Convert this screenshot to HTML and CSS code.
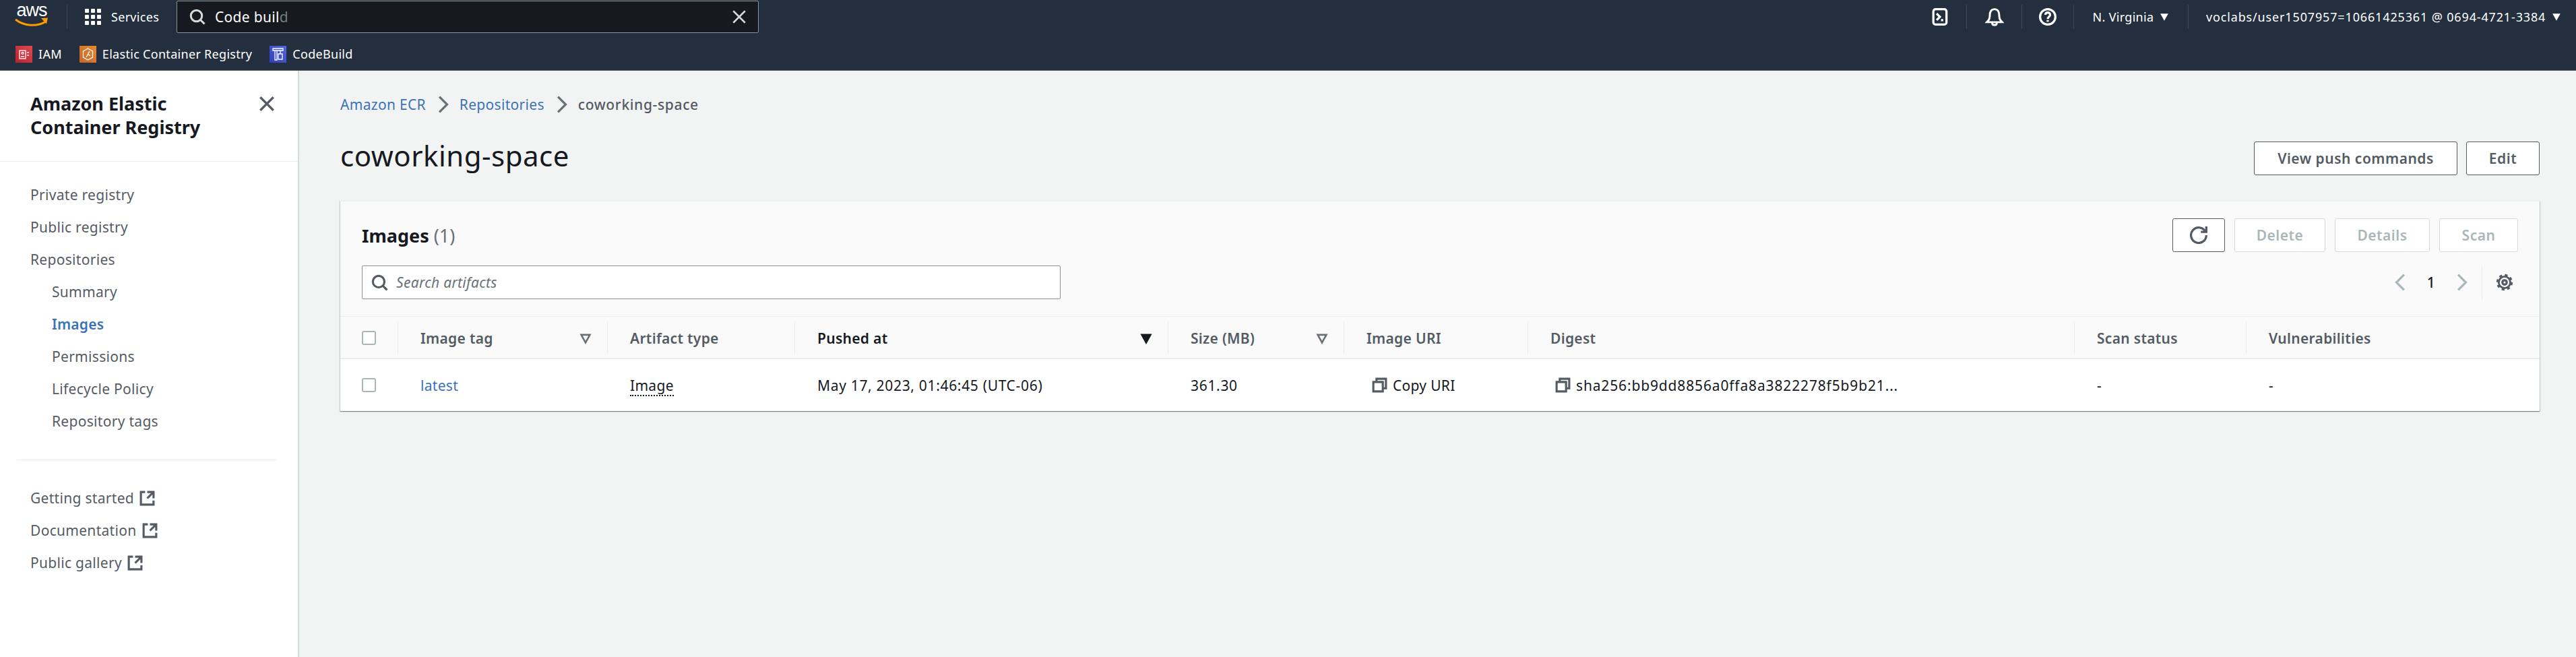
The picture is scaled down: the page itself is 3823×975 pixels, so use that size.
FILE: index.html
```html
<!DOCTYPE html>
<html lang="en">
<head>
    <meta charset="UTF-8">
    <title>coworking-space - Amazon ECR</title>
    <link rel="stylesheet" href="styles.css">
</head>
<body>
    <header class="topbar">
        <div class="toprow">
            <div class="logo">
                <span class="logo-text">aws</span>
                <svg class="logo-smile" viewBox="0 0 50 16"><path d="M1 3c13 10 32 11 45 3" fill="none" stroke="#f90" stroke-width="3"/><path d="M39 1l10-0.500-2 9z" fill="#f90"/></svg>
            </div>
            <div class="services">
                <svg class="grid-icon" viewBox="0 0 24 24" fill="#fff"><rect x="0" y="0" width="6" height="6" rx="1"/><rect x="9" y="0" width="6" height="6" rx="1"/><rect x="18" y="0" width="6" height="6" rx="1"/><rect x="0" y="9" width="6" height="6" rx="1"/><rect x="9" y="9" width="6" height="6" rx="1"/><rect x="18" y="9" width="6" height="6" rx="1"/><rect x="0" y="18" width="6" height="6" rx="1"/><rect x="9" y="18" width="6" height="6" rx="1"/><rect x="18" y="18" width="6" height="6" rx="1"/></svg>
                <span>Services</span>
            </div>
            <div class="topsearch">
                <svg class="icon-24 stroke-light" viewBox="0 0 16 16"><circle cx="7" cy="7" r="5.500"/><path d="M15 15l-4-4"/></svg>
                <span class="topsearch-text">Code buil<span class="ghost">d</span></span>
                <svg class="icon-20 stroke-light" viewBox="0 0 16 16"><path d="M1 1l14 14M15 1L1 15"/></svg>
            </div>
            <div class="topright">
                <div class="topitem item-shell">
                    <svg class="icon-26 stroke-white" viewBox="0 0 16 16"><rect x="2" y="1" width="12" height="14" rx="2"/><path d="M5 5l3 3-3 3M9 11h2"/></svg>
                </div>
                <div class="topitem item-bell">
                    <svg class="icon-28 stroke-white thin" viewBox="0 0 16 16"><path d="M1.500 12.500h13c-1.500-1.500-2.500-2.500-2.500-5.500 0-3-1-5.500-4-5.500S4 4 4 7c0 3-1 4-2.500 5.500z"/><path d="M6 13c0 1.500 1 2 2 2s2-.5 2-2"/></svg>
                </div>
                <div class="topitem item-help">
                    <svg class="icon-26 stroke-white" viewBox="0 0 16 16"><circle cx="8" cy="8" r="7"/><path d="M5.800 6.200C5.800 4.800 6.800 4 8 4s2.200.8 2.200 2.100c0 1.800-2.200 1.900-2.200 3.900"/><path d="M8 11v1.500"/></svg>
                </div>
                <div class="topitem item-region">
                    <span>N. Virginia</span>
                    <svg class="caret" viewBox="0 0 12 12" fill="#fff"><path d="M1 2h10L6 11z"/></svg>
                </div>
                <div class="topitem item-account">
                    <span class="wide-digits">voclabs/user1507957=10661425361 @ 0694-4721-3384</span>
                    <svg class="caret" viewBox="0 0 12 12" fill="#fff"><path d="M1 2h10L6 11z"/></svg>
                </div>
            </div>
        </div>
        <div class="bookmarks">
            <div class="bookmark">
                <span class="svc svc-iam"><svg viewBox="0 0 25 25" fill="none" stroke="#fff" stroke-width="1.300"><rect x="6" y="7" width="9" height="12"/><circle cx="10.500" cy="11" r="1.500"/><path d="M8 16h5M17 10h3M17 14h3"/></svg></span>
                <span>IAM</span>
            </div>
            <div class="bookmark">
                <span class="svc svc-ecr"><svg viewBox="0 0 25 25" fill="none" stroke="#fff" stroke-width="1.300"><path d="M12.500 4l7 4v9l-7 4-7-4V8z"/><path d="M10 17l5-9M12.500 12.500l3.500 2"/></svg></span>
                <span>Elastic Container Registry</span>
            </div>
            <div class="bookmark">
                <span class="svc svc-build"><svg viewBox="0 0 25 25" fill="none" stroke="#fff" stroke-width="1.300"><path d="M5 4h15v3H5zM8 7v14h3V7M13 12h6v8h-6zM16 7v5"/></svg></span>
                <span>CodeBuild</span>
            </div>
        </div>
    </header>

    <div class="layout">
        <nav class="sidebar">
            <div class="side-head">
                <h2>Amazon Elastic Container Registry</h2>
                <svg class="icon-26 stroke-grey side-close" viewBox="0 0 16 16"><path d="M2 2l12 12M14 2L2 14"/></svg>
            </div>
            <ul class="side-list">
                <li>Private registry</li>
                <li>Public registry</li>
                <li>Repositories</li>
                <li class="sub">Summary</li>
                <li class="sub active">Images</li>
                <li class="sub">Permissions</li>
                <li class="sub">Lifecycle Policy</li>
                <li class="sub">Repository tags</li>
            </ul>
            <div class="side-rule"></div>
            <ul class="side-list">
                <li>Getting started <svg class="icon-25 stroke-grey" viewBox="0 0 16 16"><path d="M14 8V2H8M14 2L8 8M6 2H2v12h12v-4"/></svg></li>
                <li>Documentation <svg class="icon-25 stroke-grey" viewBox="0 0 16 16"><path d="M14 8V2H8M14 2L8 8M6 2H2v12h12v-4"/></svg></li>
                <li>Public gallery <svg class="icon-25 stroke-grey" viewBox="0 0 16 16"><path d="M14 8V2H8M14 2L8 8M6 2H2v12h12v-4"/></svg></li>
            </ul>
        </nav>

        <main class="content">
            <div class="crumbs">
                <a>Amazon ECR</a>
                <svg class="crumb-sep" viewBox="0 0 16 16"><path d="M5 1l7 7-7 7"/></svg>
                <a>Repositories</a>
                <svg class="crumb-sep" viewBox="0 0 16 16"><path d="M5 1l7 7-7 7"/></svg>
                <span class="crumb-current">coworking-space</span>
            </div>

            <div class="page-head">
                <h1>coworking-space</h1>
                <div class="btn-row">
                    <button class="btn btn-push">View push commands</button>
                    <button class="btn btn-edit">Edit</button>
                </div>
            </div>

            <section class="card">
                <div class="card-head">
                    <div class="card-row">
                        <h3>Images <span class="count">(1)</span></h3>
                        <div class="actions">
                            <button class="btn btn-refresh"><svg class="icon-26 stroke-grey" viewBox="0 0 16 16"><path d="M10 5h5V0"/><path d="M15 8a7 7 0 1 1-.7-3"/></svg></button>
                            <button class="btn btn-off btn-delete">Delete</button>
                            <button class="btn btn-off btn-details">Details</button>
                            <button class="btn btn-off btn-scan">Scan</button>
                        </div>
                    </div>
                    <div class="card-row filter-row">
                        <div class="filter">
                            <svg class="icon-25 stroke-grey" viewBox="0 0 16 16"><circle cx="7" cy="7" r="5.500"/><path d="M15 15l-4-4"/></svg>
                            <span>Search artifacts</span>
                        </div>
                        <div class="pager">
                            <svg class="icon-26 stroke-off" viewBox="0 0 16 16"><path d="M11 1L4 8l7 7"/></svg>
                            <span class="page-num">1</span>
                            <svg class="icon-26 stroke-off" viewBox="0 0 16 16"><path d="M5 1l7 7-7 7"/></svg>
                            <div class="pager-gear">
                                <svg class="icon-26 stroke-grey" viewBox="0 0 16 16"><circle cx="8" cy="8" r="2"/><circle cx="8" cy="8" r="5.300" stroke-width="1.800"/><circle class="gear-teeth" cx="8" cy="8" r="6.600" stroke-width="1.800"/></svg>
                            </div>
                        </div>
                    </div>
                </div>

                <table class="grid">
                    <colgroup>
                        <col class="c-check"><col class="c-tag"><col class="c-type"><col class="c-pushed"><col class="c-size"><col class="c-uri"><col class="c-digest"><col class="c-scan"><col class="c-vuln">
                    </colgroup>
                    <thead>
                        <tr>
                            <th><div class="th-first"><span class="check"></span></div></th>
                            <th><div class="th-in"><span>Image tag</span><svg class="sort" viewBox="0 0 14 14"><path d="M2 3h10L7 12z"/></svg></div></th>
                            <th><div class="th-in">Artifact type</div></th>
                            <th><div class="th-in th-active"><span>Pushed at</span><svg class="sort sort-on" viewBox="0 0 14 14"><path d="M2 3h10L7 12z"/></svg></div></th>
                            <th><div class="th-in"><span>Size (MB)</span><svg class="sort" viewBox="0 0 14 14"><path d="M2 3h10L7 12z"/></svg></div></th>
                            <th><div class="th-in">Image URI</div></th>
                            <th><div class="th-in">Digest</div></th>
                            <th><div class="th-in">Scan status</div></th>
                            <th><div class="th-in">Vulnerabilities</div></th>
                        </tr>
                    </thead>
                    <tbody>
                        <tr>
                            <td class="td-check"><span class="check"></span></td>
                            <td><a>latest</a></td>
                            <td><span class="dotted">Image</span></td>
                            <td class="wide-digits">May 17, 2023, 01:46:45 (UTC-06)</td>
                            <td class="wide-digits">361.30</td>
                            <td><span class="copy"><svg class="icon-25 stroke-grey" viewBox="0 0 16 16"><path d="M2 5h9v9H2zM5 5V2h9v9h-3"/></svg>Copy URI</span></td>
                            <td><span class="copy copy-digest"><svg class="icon-25 stroke-grey" viewBox="0 0 16 16"><path d="M2 5h9v9H2zM5 5V2h9v9h-3"/></svg>sha256:bb9dd8856a0ffa8a3822278f5b9b21...</span></td>
                            <td>-</td>
                            <td>-</td>
                        </tr>
                    </tbody>
                </table>
            </section>
        </main>
    </div>
</body>
</html>
```

FILE: styles.css
```css
* {
    box-sizing: border-box;
}
body {
    margin: 0;
    height: 975px;
    overflow: hidden;
    font-family: "Noto Sans", "Open Sans", sans-serif;
    font-size: 21px;
    letter-spacing: 0.3px;
    color: #16191f;
    background-color: #f2f3f3;
}
h1, h2, h3, ul {
    margin: 0;
    padding: 0;
}
svg {
    flex: none;
    display: block;
}
.wide-digits {
    letter-spacing: 0.68px;
}

/* icons */
.icon-20, .icon-24, .icon-25, .icon-26, .icon-28 {
    fill: none;
    stroke-width: 2;
}
.icon-20 { width: 20px; height: 20px; }
.icon-24 { width: 24px; height: 24px; }
.icon-25 { width: 25px; height: 25px; }
.icon-26 { width: 26px; height: 26px; }
.icon-28 { width: 28px; height: 28px; }
.thin { stroke-width: 1.700; }
.stroke-light { stroke: #d5dbdb; }
.stroke-white { stroke: #fff; }
.stroke-grey { stroke: #545b64; }
.stroke-off { stroke: #aab7b8; }

/* top bar */
.topbar {
    height: 105px;
    background-color: #232f3e;
    border-bottom: 1px solid #545b64;
    color: #fff;
    font-size: 18px;
}
.toprow {
    display: flex;
    align-items: center;
    height: 50px;
}
.logo {
    width: 100px;
    height: 36px;
    padding-left: 22px;
    border-right: 1px solid #414750;
    line-height: 1;
}
.logo-text {
    display: block;
    width: 50px;
    height: 22px;
    margin-top: -4px;
    font-family: "Liberation Sans", sans-serif;
    font-size: 27px;
    line-height: 24px;
    text-align: center;
    letter-spacing: -1px;
}
.logo-smile {
    width: 50px;
    height: 16px;
    margin-top: 1px;
}
.services {
    display: flex;
    align-items: center;
    gap: 15px;
    width: 162px;
    padding-left: 26px;
}
.grid-icon {
    width: 24px;
    height: 24px;
}
.topsearch {
    display: flex;
    align-items: center;
    width: 864px;
    height: 48px;
    padding: 0 18px;
    background-color: #16191f;
    border: 1px solid #879596;
    border-radius: 2px;
    font-size: 21px;
}
.topsearch-text {
    flex: 1;
    margin-left: 14px;
}
.ghost {
    color: #6f8082;
}
.topright {
    display: flex;
    margin-left: auto;
}
.topitem {
    display: flex;
    align-items: center;
    justify-content: center;
    height: 36px;
    border-left: 1px solid #414750;
}
.item-shell { width: 79px; border-left: 0; }
.item-bell { width: 82px; }
.item-help { width: 77px; }
.item-region { width: 170px; gap: 9px; }
.item-account { width: 576px; gap: 9px; justify-content: flex-start; padding-left: 26px; }
.item-account .wide-digits {
    letter-spacing: 0.85px;
}
.caret {
    width: 14px;
    height: 14px;
}
.bookmarks {
    display: flex;
    align-items: center;
    height: 54px;
    padding: 6px 0 0 23px;
}
.bookmark {
    display: flex;
    align-items: center;
    gap: 9px;
    margin-right: 26px;
}
.svc {
    width: 25px;
    height: 25px;
}
.svc-iam { background: linear-gradient(45deg, #b8232f, #e0484f); }
.svc-ecr { background: linear-gradient(45deg, #c8642a, #e68a2e); }
.svc-build { background: linear-gradient(45deg, #3240b8, #5066e0); }

/* layout */
.layout {
    display: flex;
    height: 870px;
}
.sidebar {
    flex: none;
    width: 444px;
    background-color: #fff;
    border-right: 2px solid #d5dbdb;
    color: #545b64;
}
.side-head {
    display: flex;
    justify-content: space-between;
    height: 135px;
    padding: 31px 33px 0 45px;
    border-bottom: 1px solid #eaeded;
}
.side-head h2 {
    width: 300px;
    font-size: 27px;
    font-weight: 700;
    line-height: 35px;
    letter-spacing: 0;
    color: #16191f;
}
.side-close {
    margin-top: 5px;
}
.side-list {
    list-style: none;
    padding-top: 25px;
}
.side-list li {
    display: flex;
    align-items: center;
    gap: 7px;
    height: 48px;
    padding-left: 45px;
}
.side-list li.sub {
    padding-left: 77px;
}
.side-list li.active {
    color: #3b73b9;
    font-weight: 600;
    letter-spacing: 0.2px;
}
.side-rule {
    height: 1px;
    margin: 33px 32px 7px 25px;
    background-color: #eaeded;
}

/* main content */
.content {
    flex: 1;
    padding: 35px 54px 0 61px;
}
.crumbs {
    display: flex;
    align-items: center;
    height: 30px;
}
.crumbs a {
    color: #3b73b9;
}
.crumb-sep {
    width: 26px;
    height: 26px;
    margin: 0 12px;
    fill: none;
    stroke: #687078;
    stroke-width: 2;
}
.crumb-current {
    color: #545b64;
    font-weight: 500;
    letter-spacing: 0.65px;
}
.page-head {
    display: flex;
    align-items: center;
    justify-content: space-between;
    height: 60px;
    margin-top: 35px;
}
.page-head h1 {
    margin-bottom: 9px;
    font-size: 42px;
    font-weight: 400;
    letter-spacing: 0.5px;
}
.btn-row {
    display: flex;
    gap: 13px;
}
.actions {
    display: flex;
    gap: 14px;
}
.btn {
    display: flex;
    align-items: center;
    justify-content: center;
    height: 50px;
    padding: 0;
    background-color: #fff;
    border: 1px solid #545b64;
    border-radius: 3px;
    font-family: inherit;
    font-size: 21px;
    font-weight: 600;
    letter-spacing: 0.5px;
    color: #545b64;
}
.btn-push { width: 302px; }
.btn-edit { width: 109px; }
.btn-refresh { width: 78px; }
.btn-delete { width: 135px; }
.btn-details { width: 141px; }
.btn-scan { width: 117px; }
.btn-off {
    border-color: #d5dbdb;
    color: #aab7b8;
}

/* images card */
.card {
    height: 312px;
    margin-top: 33px;
    background-color: #fff;
    border-top: 1px solid #eaeded;
    box-shadow: 0 1px 1px 0 rgba(0, 28, 36, 0.3), 1px 1px 1px 0 rgba(0, 28, 36, 0.15), -1px 1px 1px 0 rgba(0, 28, 36, 0.15);
}
.card-head {
    height: 171px;
    padding: 25px 32px 0;
    background-color: #fafafa;
    border-bottom: 1px solid #eaeded;
}
.card-row {
    display: flex;
    align-items: center;
    justify-content: space-between;
}
.card-row h3 {
    font-size: 27px;
    font-weight: 700;
    letter-spacing: 0;
}
.count {
    font-weight: 400;
    color: #687078;
}
.filter-row {
    margin-top: 20px;
}
.filter {
    display: flex;
    align-items: center;
    gap: 12px;
    width: 1037px;
    height: 50px;
    padding-left: 13px;
    background-color: #fff;
    border: 1px solid #879596;
    border-radius: 2px;
    font-style: italic;
    color: #687078;
}
.pager {
    display: flex;
    align-items: center;
    height: 50px;
}
.page-num {
    width: 64px;
    text-align: center;
    font-weight: 500;
}
.pager-gear {
    display: flex;
    align-items: center;
    height: 50px;
    margin-left: 17px;
    padding: 0 7px 0 20px;
    border-left: 1px solid #eaeded;
}
.gear-teeth {
    stroke-dasharray: 2.600 2.583;
}

/* table */
.grid {
    width: 100%;
    table-layout: fixed;
    border-collapse: collapse;
}
.c-check { width: 85px; }
.c-tag { width: 311px; }
.c-type { width: 278px; }
.c-pushed { width: 554px; }
.c-size { width: 261px; }
.c-uri { width: 273px; }
.c-digest { width: 811px; }
.c-scan { width: 255px; }
.grid th {
    height: 62px;
    padding: 2px 0 0;
    background-color: #fafafa;
    border-bottom: 2px solid #eaeded;
    text-align: left;
    font-weight: 600;
    letter-spacing: 0.3px;
    color: #545b64;
}
.th-first {
    display: flex;
    align-items: center;
    padding-left: 32px;
}
.th-in {
    display: flex;
    align-items: center;
    justify-content: space-between;
    height: 48px;
    padding: 0 23px 0 33px;
    border-left: 1px solid #eaeded;
}
.th-active {
    color: #16191f;
}
.sort {
    width: 18px;
    height: 18px;
    fill: none;
    stroke: #687078;
    stroke-width: 2;
}
.sort-on {
    fill: #16191f;
    stroke: #16191f;
}
.check {
    display: block;
    width: 21px;
    height: 21px;
    background-color: #fff;
    border: 2px solid #aab7b8;
    border-radius: 3px;
}
.grid td {
    height: 78px;
    padding: 0 0 0 34px;
}
.grid td.td-check {
    padding-left: 32px;
}
.grid td a {
    color: #3b73b9;
}
.dotted {
    border-bottom: 2px dotted #16191f;
}
.copy {
    display: flex;
    align-items: center;
    gap: 7px;
    padding-left: 7px;
    white-space: nowrap;
}
.copy-digest {
    padding-left: 6px;
    letter-spacing: 0.85px;
}
```
